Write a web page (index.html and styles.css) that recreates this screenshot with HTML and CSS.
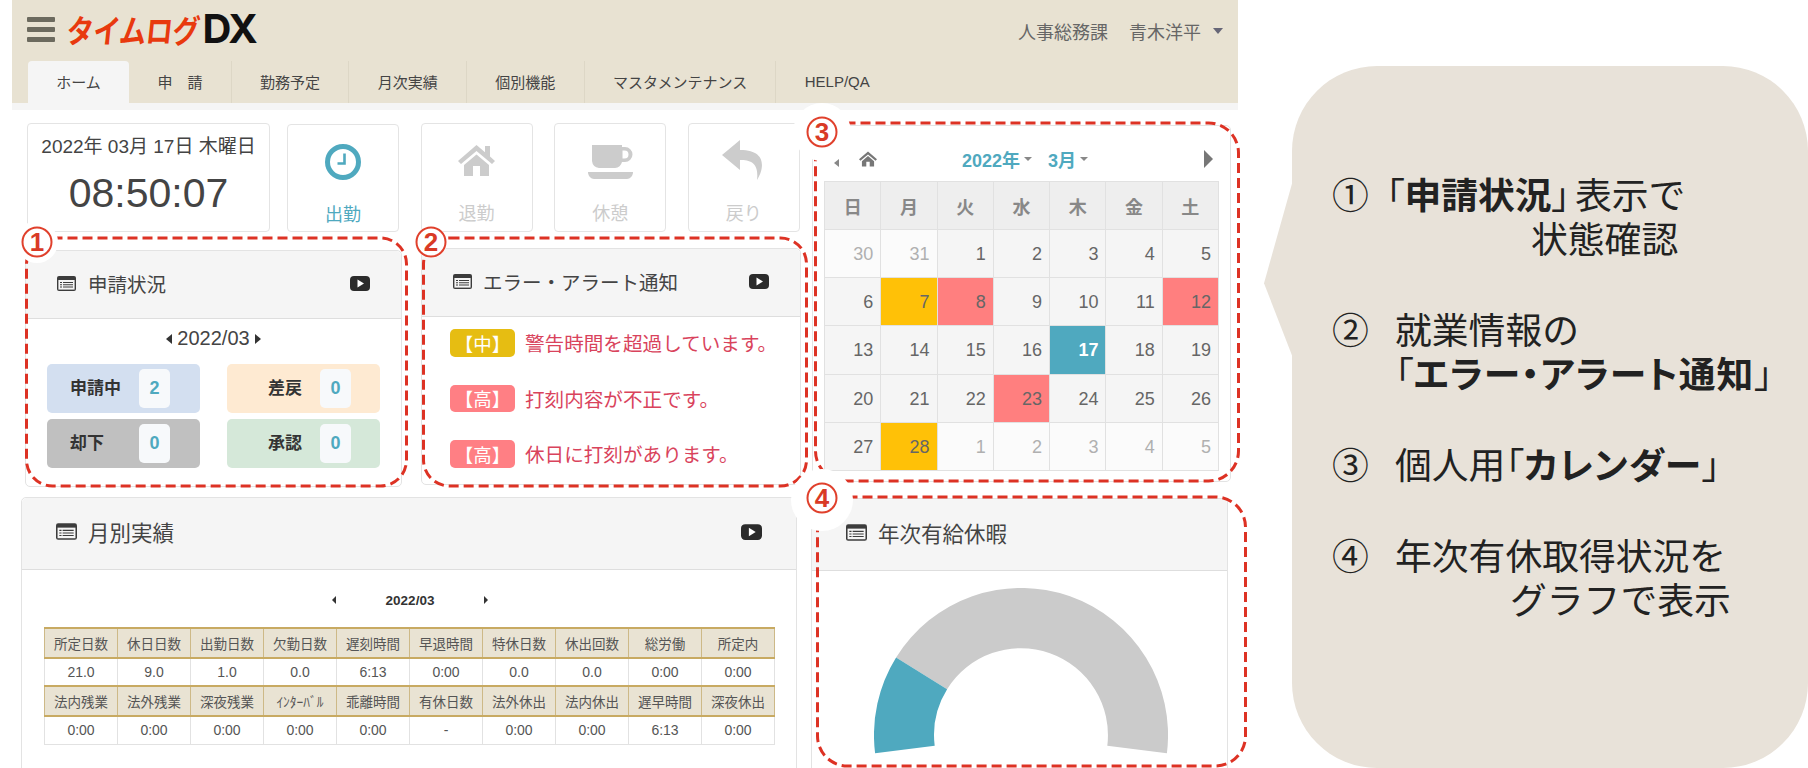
FILE: index.html
```html
<!DOCTYPE html>
<html lang="ja">
<head>
<meta charset="utf-8">
<title>タイムログDX</title>
<link rel="stylesheet" href="styles.css">
</head>
<body>
<svg class="defs" width="0" height="0" aria-hidden="true">
  <symbol id="i-list" viewBox="0 0 19 15">
    <rect width="19" height="15" rx="2" fill="#3c3c3c"/>
    <rect x="1.4" y="4" width="16.2" height="9.6" fill="#f5f5f5"/>
    <path d="M3 6h2v1H3zM6 6h10v1H6zM3 8.3h2v1H3zM6 8.3h10v1H6zM3 10.6h2v1H3zM6 10.6h10v1H6z" fill="#3c3c3c"/>
  </symbol>
  <symbol id="i-play" viewBox="0 0 20 15">
    <rect width="20" height="15" rx="4" fill="#2b2b2b"/>
    <path d="M7.5 3.5L14 7.5 7.5 11.5z" fill="#fff"/>
  </symbol>
</svg>

<div class="page">
  <main class="app">
    <header class="head">
      <div class="head-top">
        <div class="burger"><span></span><span></span><span></span></div>
        <div class="logo"><span class="logo-ja">タイムログ</span><span class="logo-en">DX</span></div>
        <div class="user">
          <span>人事総務課</span><span>青木洋平</span><i class="caret"></i>
        </div>
      </div>
      <nav class="tabs">
        <a class="tab tab-active">ホーム</a>
        <a class="tab">申　請</a>
        <a class="tab">勤務予定</a>
        <a class="tab">月次実績</a>
        <a class="tab">個別機能</a>
        <a class="tab">マスタメンテナンス</a>
        <a class="tab tab-last">HELP/QA</a>
      </nav>
    </header>
    <div class="strip"></div>

    <div class="dash">
      <div class="col-left">
        <section class="top">
          <div class="clock-card">
            <div class="date">2022年 03月 17日 木曜日</div>
            <div class="time">08:50:07</div>
          </div>
          <button class="punch punch-on">
            <svg class="ic-clock" viewBox="0 0 36 36"><circle cx="18" cy="18" r="15.5" fill="none" stroke="#4fa9bf" stroke-width="5"/><path d="M19.5 9.5v10h-7" fill="none" stroke="#4fa9bf" stroke-width="2.6"/></svg>
            <span>出勤</span>
          </button>
          <button class="punch">
            <svg class="ic-home" viewBox="0 0 37 31"><path d="M18.5 0L27 7.2V1h5v10.5L37 16l-3 3L18.5 6 3 19l-3-3zM6 20L18.5 9.5 31 20v11h-9V21h-7v10H6z" fill="#ccc"/></svg>
            <span>退勤</span>
          </button>
          <button class="punch">
            <svg class="ic-coffee" viewBox="0 0 45 35"><path fill-rule="evenodd" d="M4 0h30v2h3a7.5 7.5 0 010 15h-3a8 8 0 01-7 6H11a8 8 0 01-7-7zM34.500 5.500v8h2a4 4 0 000-8z" fill="#ccc"/><path d="M0 27h45c0 4-3 7-6 7H6c-3 0-6-3-6-7z" fill="#ccc"/></svg>
            <span>休憩</span>
          </button>
          <button class="punch">
            <svg class="ic-reply" viewBox="0 0 44 40"><path d="M18 0L0 15l18 15V20c11 0 19 3 17 20 6-9 12-30-17-30z" fill="#ccc"/></svg>
            <span>戻り</span>
          </button>
        </section>

        <section class="panels">
          <article class="card panel-status">
            <header class="card-head">
              <svg class="ic-list"><use href="#i-list"/></svg>
              <h2>申請状況</h2>
              <svg class="ic-play"><use href="#i-play"/></svg>
            </header>
            <div class="ym"><i class="tri tri-l"></i><span>2022/03</span><i class="tri tri-r"></i></div>
            <div class="stats">
              <div class="stat stat-blue"><b class="stat-label">申請中</b><span class="stat-num">2</span></div>
              <div class="stat stat-orange"><b class="stat-label stat-label-r">差戻</b><span class="stat-num">0</span></div>
              <div class="stat stat-gray"><b class="stat-label">却下</b><span class="stat-num">0</span></div>
              <div class="stat stat-green"><b class="stat-label stat-label-r">承認</b><span class="stat-num">0</span></div>
            </div>
          </article>

          <article class="card panel-alert">
            <header class="card-head card-head-alert">
              <svg class="ic-list"><use href="#i-list"/></svg>
              <h2>エラー・アラート通知</h2>
              <svg class="ic-play"><use href="#i-play"/></svg>
            </header>
            <ul class="alerts">
              <li><span class="lvl lvl-mid">【中】</span><span>警告時間を超過しています。</span></li>
              <li><span class="lvl lvl-high">【高】</span><span>打刻内容が不正です。</span></li>
              <li><span class="lvl lvl-high">【高】</span><span>休日に打刻があります。</span></li>
            </ul>
          </article>
        </section>

        <article class="card panel-month">
          <header class="card-head card-head-big">
            <svg class="ic-list ic-list-big"><use href="#i-list"/></svg>
            <h2>月別実績</h2>
            <svg class="ic-play ic-play-big"><use href="#i-play"/></svg>
          </header>
          <div class="month-nav"><i class="tri tri-l tri-sm"></i><b>2022/03</b><i class="tri tri-r tri-sm"></i></div>
          <table class="month">
            <tr class="mh"><th>所定日数</th><th>休日日数</th><th>出勤日数</th><th>欠勤日数</th><th>遅刻時間</th><th>早退時間</th><th>特休日数</th><th>休出回数</th><th>総労働</th><th>所定内</th></tr>
            <tr class="mb"><td>21.0</td><td>9.0</td><td>1.0</td><td>0.0</td><td>6:13</td><td>0:00</td><td>0.0</td><td>0.0</td><td>0:00</td><td>0:00</td></tr>
            <tr class="mh"><th>法内残業</th><th>法外残業</th><th>深夜残業</th><th>ｲﾝﾀｰﾊﾞﾙ</th><th>乖離時間</th><th>有休日数</th><th>法外休出</th><th>法内休出</th><th>遅早時間</th><th>深夜休出</th></tr>
            <tr class="mb"><td>0:00</td><td>0:00</td><td>0:00</td><td>0:00</td><td>0:00</td><td>-</td><td>0:00</td><td>0:00</td><td>6:13</td><td>0:00</td></tr>
          </table>
        </article>
      </div>

      <div class="col-right">
        <article class="card panel-cal">
          <div class="cal-nav">
            <i class="tri tri-l tri-xs"></i>
            <svg class="ic-home-sm" viewBox="0 0 37 31"><path d="M18.5 0L37 16l-3 3L18.500 6 3 19l-3-3zM6 20L18.500 9.500 31 20v11h-9V21h-7v10H6z" fill="#777"/></svg>
            <span class="cal-title">2022年<i class="mini-caret"></i></span>
            <span class="cal-title cal-title-m">3月<i class="mini-caret"></i></span>
            <i class="tri tri-r tri-lg"></i>
          </div>
          <table class="cal">
            <tr><th>日</th><th>月</th><th>火</th><th>水</th><th>木</th><th>金</th><th>土</th></tr>
            <tr><td class="off">30</td><td class="off">31</td><td>1</td><td>2</td><td>3</td><td>4</td><td>5</td></tr>
            <tr><td>6</td><td class="yel">7</td><td class="red">8</td><td>9</td><td>10</td><td>11</td><td class="red">12</td></tr>
            <tr><td>13</td><td>14</td><td>15</td><td>16</td><td class="today">17</td><td>18</td><td>19</td></tr>
            <tr><td>20</td><td>21</td><td>22</td><td class="red">23</td><td>24</td><td>25</td><td>26</td></tr>
            <tr><td>27</td><td class="yel">28</td><td class="off">1</td><td class="off">2</td><td class="off">3</td><td class="off">4</td><td class="off">5</td></tr>
          </table>
        </article>

        <article class="card panel-leave">
          <header class="card-head card-head-big">
            <svg class="ic-list ic-list-big"><use href="#i-list"/></svg>
            <h2>年次有給休暇</h2>
          </header>
          <svg class="gauge" viewBox="0 0 294 168" width="294" height="168">
            <path d="M22.100 69.500A147 147 0 01292.900 165.200L233.300 157.800A87 87 0 0073.100 101.200Z" fill="#cbcbcb"/>
            <path d="M1.100 165.200A147 147 0 0122.100 69.500L73.100 101.200A87 87 0 0060.700 157.800Z" fill="#4fa9bf"/>
          </svg>
        </article>
      </div>
    </div>
  </main>

  <aside class="callout">
    <div class="note">
      <div class="note-line"><span class="num num-tight">①</span><span class="note-text"><span class="br">「</span><b class="tight">申請状況</b><span class="br br-end">」</span>表示で</span></div>
      <div class="note-line note-cont-a">状態確認</div>
    </div>
    <div class="note">
      <div class="note-line"><span class="num">②</span><span class="note-text">就業情報の</span></div>
      <div class="note-line note-cont-b"><span class="br">「</span><b>エラー・アラート通知</b><span class="br">」</span></div>
    </div>
    <div class="note">
      <div class="note-line"><span class="num">③</span><span class="note-text">個人用<span class="br">「</span><b>カレンダー</b><span class="br">」</span></span></div>
    </div>
    <div class="note">
      <div class="note-line"><span class="num">④</span><span class="note-text">年次有休取得状況を</span></div>
      <div class="note-line note-cont-c">グラフで表示</div>
    </div>
  </aside>
</div>

<svg class="marks" width="1808" height="768" viewBox="0 0 1808 768">
  <g class="mark-frames">
    <rect x="26.500" y="238" width="380" height="248" rx="26"/>
    <rect x="423.500" y="238" width="383" height="248" rx="26"/>
    <rect x="815.500" y="123" width="423" height="358" rx="30"/>
    <rect x="817.500" y="497" width="428" height="269" rx="30"/>
  </g>
  <circle class="blob" cx="37" cy="242" r="21"/>
  <circle class="blob" cx="431" cy="242" r="16"/>
  <circle class="blob" cx="822" cy="132" r="29"/>
  <circle class="blob" cx="822" cy="500" r="31"/>
  <circle class="ring" cx="37" cy="242" r="14.500"/>
  <circle class="ring" cx="431" cy="242" r="14.500"/>
  <circle class="ring" cx="822" cy="132" r="14.500"/>
  <circle class="ring" cx="822" cy="498" r="14.500"/>
  <text class="ring-num" x="37" y="251">1</text>
  <text class="ring-num" x="431" y="251">2</text>
  <text class="ring-num" x="822" y="141">3</text>
  <text class="ring-num" x="822" y="507">4</text>
</svg>
</body>
</html>
```

FILE: styles.css
```css
* { box-sizing: border-box; }
html, body { margin: 0; height: 768px; overflow: hidden; background: #fff; }
body { font-family: "Liberation Sans", "Noto Sans CJK JP", sans-serif; color: #444; position: relative; }
.defs { position: absolute; }
h2 { margin: 0; font-weight: 400; }
ul { margin: 0; padding: 0; list-style: none; }

.page { display: flex; height: 768px; }
.app { width: 1226px; margin-left: 12px; flex: none; }

/* header */
.head { background: #e8e2d2; height: 103px; }
.head-top { display: flex; align-items: center; height: 61px; }
.burger { display: flex; flex-direction: column; gap: 5px; width: 28px; margin-left: 15px; margin-top: -3px; }
.burger span { display: block; height: 5px; background: #6c6a5e; border-radius: 1px; }
.logo { margin-left: 12px; display: flex; align-items: center; line-height: 1; margin-top: -3px; }
.logo-ja { font-family: "Noto Sans CJK JP", sans-serif; font-weight: 700; font-size: 27px; letter-spacing: -0.400px; color: #e8390e; transform: skewX(-6deg) scaleY(1.2); display: inline-block; }
.logo-en { font-family: "Inter", "Liberation Sans", sans-serif; font-weight: 700; font-size: 40px; letter-spacing: -1px; color: #111; margin-left: 3px; }
.user { margin-left: auto; margin-right: 15px; display: flex; align-items: center; gap: 21px; font-size: 18px; color: #666; margin-top: 1px; }
.caret { width: 0; height: 0; border: 5px solid transparent; border-top: 6px solid #667; border-bottom: 0; margin-left: -9px; }

.tabs { display: flex; height: 42px; margin-left: 16px; }
.tab { display: flex; align-items: center; padding: 0 28.300px 2px; font-size: 15px; color: #444; border-right: 1px solid #ddd7c6; }
.tab-active { background: #f5f5f5; border-right: 0; border-radius: 4px 4px 0 0; }
.tab-last { border-right: 0; }
.strip { height: 7px; background: #f5f5f5; }

/* layout */
.dash { display: flex; padding: 13px 0 0 9px; gap: 11px; }
.col-left { width: 780px; flex: none; }
.col-right { width: 420px; flex: none; }

.top { display: flex; margin-left: 6px; height: 109px; }
.clock-card { width: 243px; flex: none; margin-right: 17px; border: 1px solid #e4e4e4; border-radius: 4px; text-align: center; }
.date { font-size: 19px; margin-top: 12px; color: #444; line-height: 22px; }
.time { font-size: 41px; color: #444; margin-top: 12px; line-height: 46px; }
.punch { position: relative; width: 112px; margin-right: 21.600px; flex: none; padding: 0; background: #fff; border: 1px solid #e4e4e4; border-radius: 4px; font: inherit; font-size: 18px; color: #ccc; display: flex; flex-direction: column; align-items: center; }
.punch-on { margin-top: 1px; color: #4fa9bf; }
.punch span { position: absolute; top: 75px; }
.ic-clock { width: 36px; height: 36px; margin-top: 19px; }
.ic-home { width: 37px; height: 31px; margin-top: 21px; }
.ic-coffee { width: 45px; height: 35px; margin-top: 21px; }
.ic-reply { width: 44px; height: 40px; margin-top: 16px; }

/* cards */
.card { border: 1px solid #e3e3e3; border-radius: 5px; background: #fff; }
.card-head { display: flex; align-items: center; height: 68px; padding: 0 31px 3px; background: #f5f5f5; border-bottom: 1px solid #dedede; border-radius: 5px 5px 0 0; }
.card-head h2 { font-size: 19.500px; margin-left: 12px; color: #444; }
.ic-list { width: 19px; height: 15px; flex: none; }
.ic-play { width: 20px; height: 15px; margin-left: auto; flex: none; }

.panels { display: flex; margin-left: 4px; height: 265px; align-items: flex-start; }
.panel-status { width: 377px; height: 237px; margin-top: 18px; }
.panel-alert { width: 380px; height: 237px; margin-top: 16px; margin-left: 19px; }
.card-head-alert h2 { margin-left: 11px; }

.ym { display: flex; align-items: center; justify-content: center; height: 39px; font-size: 20px; color: #444; gap: 5px; }
.tri { display: block; width: 0; height: 0; border-style: solid; border-color: transparent; flex: none; }
.tri-l { border-width: 5px 6px 5px 0; border-right-color: #333; }
.tri-r { border-width: 5px 0 5px 6px; border-left-color: #333; }
.stats { display: grid; grid-template-columns: 153px 153px; grid-auto-rows: 49px; column-gap: 27px; row-gap: 6px; margin: 6px 0 0 21px; }
.stat { display: flex; align-items: center; border-radius: 5px; padding-left: 23px; }
.stat-label { font-size: 17px; color: #333; width: 69px; padding-bottom: 4px; }
.stat-label-r { margin-left: 18px; width: 52px; }
.stat-num { width: 31px; height: 39px; margin-top: -1px; background: #f7f9fb; border-radius: 5px; color: #4fa9bf; font-weight: 700; font-size: 18px; display: flex; align-items: center; justify-content: center; }
.stat-blue { background: #d3dff0; }
.stat-orange { background: #feead2; }
.stat-gray { background: #c0c0c0; }
.stat-green { background: #d5e8d9; }

.alerts { padding: 12px 0 0 28px; display: flex; flex-direction: column; gap: 28px; font-size: 19.600px; color: #d9435c; }
.alerts li { display: flex; align-items: center; height: 27.500px; }
.lvl { width: 65px; height: 27.500px; margin-right: 10px; border-radius: 5px; color: #fff; font-size: 18.500px; display: flex; align-items: center; justify-content: center; }
.lvl-mid { background: #e6bd12; }
.lvl-high { background: #ff7f84; }

/* monthly */
.panel-month { width: 776px; height: 300px; }
.card-head-big { height: 72px; padding: 0 34px 4px; }
.card-head-big h2 { font-size: 21.500px; margin-left: 11px; }
.ic-list-big { width: 21px; height: 17px; }
.ic-play-big { width: 21px; height: 16px; }
.month-nav { display: flex; align-items: center; justify-content: center; height: 57px; gap: 50px; padding: 3px 0 0 2px; font-size: 13.500px; color: #333; }
.tri-sm.tri-l { border-width: 4px 4px 4px 0; }
.tri-sm.tri-r { border-width: 4px 0 4px 4px; }
.month { border-collapse: collapse; table-layout: fixed; width: 731px; margin-left: 22px; text-align: center; }
.month th, .month td { border: 1px solid #e2e2e2; padding: 0; font-weight: 400; font-size: 13.500px; color: #555; }
.mh th { height: 29.500px; background: #e9e3d3; border: 1px solid #cdb987; border-top: 2px solid #c8aa62; border-bottom: 2px solid #c8aa62; }
.mb td { height: 28.500px; font-size: 14px; }

/* calendar */
.panel-cal { height: 357px; width: 419px; margin-top: 2px; }
.cal-nav { display: flex; align-items: center; height: 55px; padding-top: 10px; }
.tri-xs.tri-l { border-width: 4.500px 5px 4.500px 0; border-right-color: #888; margin: 8px 0 0 21px; }
.ic-home-sm { width: 18px; height: 16px; margin-left: 20px; }
.cal-title { display: flex; align-items: center; font-size: 18px; font-weight: 700; color: #4fa9bf; margin-left: 85px; }
.cal-title-m { margin-left: 16px; }
.mini-caret { width: 0; height: 0; border: 4px solid transparent; border-top: 4.500px solid #888; border-bottom: 0; margin-left: 4px; }
.tri-lg.tri-r { border-width: 9.500px 0 9.500px 9px; border-left-color: #777; margin-left: auto; margin-right: 17px; }
.cal { border-collapse: collapse; table-layout: fixed; width: 395px; margin-left: 11px; }
.cal th, .cal td { border: 1px solid #e1e1e1; padding: 0; }
.cal th { height: 48px; background: #eeeeee; color: #888; font-size: 18px; font-weight: 700; text-align: center; }
.cal td { height: 48.200px; background: #f5f5f5; color: #666; font-size: 18px; text-align: right; padding-right: 7px; padding-top: 2px; }
.cal td.off { background: #fbfbfb; color: #b0b0b0; }
.cal td.yel { background: #ffc107; }
.cal td.red { background: #ff7f7f; }
.cal td.today { background: #4fa9bf; color: #fff; font-weight: 700; }

/* leave */
.panel-leave { width: 417px; height: 300px; margin-top: 16px; margin-left: -1px; }
.gauge { display: block; margin: 17px 0 0 62px; }

/* callout */
.callout { position: relative; margin: 66px 0 0 54px; width: 516px; height: 702px; background: #e8e2d9; border-radius: 85px; padding: 105px 0 0 40px; font-family: "Noto Sans CJK JP", sans-serif; font-size: 36.800px; line-height: 44px; color: #222; flex: none; }
.callout::before { content: ""; position: absolute; left: -28px; top: 114px; width: 29px; height: 178px; background: #e8e2d9; clip-path: polygon(100% 0, 0 58%, 100% 100%); }
.callout b { font-weight: 700; letter-spacing: 1px; font-feature-settings: "palt"; }
.callout b.tight { letter-spacing: 0; }
.br { font-feature-settings: "palt"; }
.br-end { margin-right: 5px; }
.note { margin-bottom: 47px; }
.note-line { display: flex; height: 44px; white-space: nowrap; }
.num { width: 63px; flex: none; }
.num-tight { width: 54px; }
.note-cont-a { padding-left: 199px; }
.note-cont-b { padding-left: 63px; }
.note-cont-c { padding-left: 178px; }

/* annotations */
.marks { position: absolute; left: 0; top: 0; pointer-events: none; }
.mark-frames rect { fill: none; stroke: #dd3224; stroke-width: 3; stroke-dasharray: 10 5; }
.blob { fill: #fff; }
.ring { fill: #fff; stroke: #e0402c; stroke-width: 2; }
.ring-num { font-family: "Liberation Sans", sans-serif; font-size: 26px; font-weight: 700; fill: #d93a26; text-anchor: middle; }
```
